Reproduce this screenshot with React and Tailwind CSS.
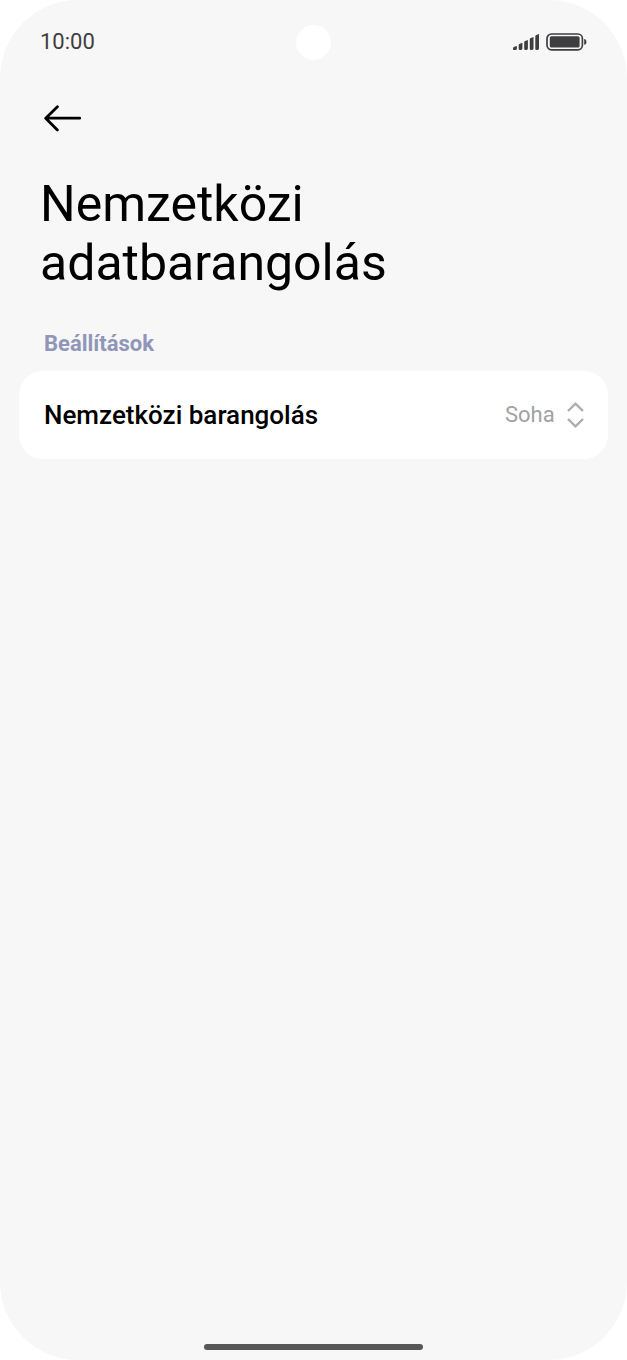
// src/pages/DataRoamingPage.jsx
import { useState } from 'react';

function SignalIcon() {
  return (
    <svg width="26" height="16" viewBox="0 0 26 16" fill="#3e3e40" aria-hidden="true">
      <path d="M0 14.4a2 2 0 0 1 1.3-1.6l2.6-.9v2.5A1.6 1.6 0 0 1 2.3 16H1.3A1.3 1.3 0 0 1 0 14.4z" />
      <path d="M5.7 11.2a1.5 1.5 0 0 1 1-1.4l2.7-1v5.8A1.4 1.4 0 0 1 8 16h-1a1.3 1.3 0 0 1-1.3-1.3z" />
      <path d="M11.2 8.3a1.5 1.5 0 0 1 1-1.4l2.7-1v8.7a1.4 1.4 0 0 1-1.4 1.4h-1a1.3 1.3 0 0 1-1.3-1.3z" />
      <path d="M16.8 5.3a1.5 1.5 0 0 1 1-1.4l2.7-1v11.7a1.4 1.4 0 0 1-1.4 1.4h-1a1.3 1.3 0 0 1-1.3-1.3z" />
      <path d="M22.3 2.4a1.5 1.5 0 0 1 1-1.4L26 0v14.6a1.4 1.4 0 0 1-1.4 1.4h-1a1.3 1.3 0 0 1-1.3-1.3z" />
    </svg>
  );
}

function BatteryIcon() {
  return (
    <svg width="41" height="18" viewBox="0 0 41 18" fill="none" aria-hidden="true">
      <rect x="1" y="1" width="35.4" height="15.8" rx="4.5" stroke="#3e3e40" strokeWidth="1.7" />
      <rect x="3.8" y="3.2" width="29.8" height="11.4" rx="1.6" fill="#3e3e40" />
      <path d="M38.2 6c1.5.2 2.2 1.2 2.2 2.9s-.7 2.7-2.2 2.9z" fill="#3e3e40" />
    </svg>
  );
}

export default function DataRoamingPage() {
  const [roaming, setRoaming] = useState('never');

  return (
    <div className="min-h-screen bg-white font-['Roboto',sans-serif]">
      <div className="flex min-h-screen flex-col rounded-[78px] bg-[#f7f7f7]">
        {/* Status bar */}
        <header className="grid h-21 grid-cols-[1fr_auto_1fr] items-center px-10">
          <span className="text-[22px] leading-7 text-[#3e3e40]">10:00</span>
          <span className="size-[35px] rounded-full bg-white" />
          <div className="flex items-center justify-end gap-[7px]">
            <SignalIcon />
            <BatteryIcon />
          </div>
        </header>

        <main className="flex-1">
          <div className="px-10">
            <button type="button" aria-label="Vissza" className="mt-4 flex h-9 w-11 items-center pl-1">
              <svg width="38" height="28" viewBox="0 0 38 28" fill="none" stroke="#000" strokeWidth="2.8" strokeLinecap="round" strokeLinejoin="round">
                <path d="M35.7 14.2H2M13.4 2.7L1.7 14.2l11.7 11.7" />
              </svg>
            </button>
            <h1 className="mt-[39px] text-[50px] leading-[59px] text-black">
              Nemzetközi adatbarangolás
            </h1>
          </div>

          <section className="mt-[37px] px-[19px]">
            <h2 className="pl-[25px] text-[22px] leading-7 font-bold text-[#9096b8]">Beállítások</h2>
            <div className="mt-[13px] flex h-22 items-center justify-between rounded-3xl bg-white pr-6 pl-[25px]">
              <label htmlFor="roaming" className="text-[26px] leading-8 font-medium text-black">
                Nemzetközi barangolás
              </label>
              <div className="flex items-center gap-3">
                <select
                  id="roaming"
                  value={roaming}
                  onChange={(e) => setRoaming(e.target.value)}
                  className="appearance-none bg-transparent text-[22px] leading-7 text-[#a1a1a1]"
                >
                  <option value="never">Soha</option>
                </select>
                <svg width="17" height="26" viewBox="0 0 17 26" fill="none" stroke="#adadad" strokeWidth="2.4" aria-hidden="true">
                  <path d="M1 9l7.5-7.3L16 9M1 17l7.5 7.3L16 17" />
                </svg>
              </div>
            </div>
          </section>
        </main>

        {/* Home indicator */}
        <footer className="flex justify-center pb-[10px]">
          <span className="h-[6px] w-[35%] rounded-full bg-[#565756]" />
        </footer>
      </div>
    </div>
  );
}
